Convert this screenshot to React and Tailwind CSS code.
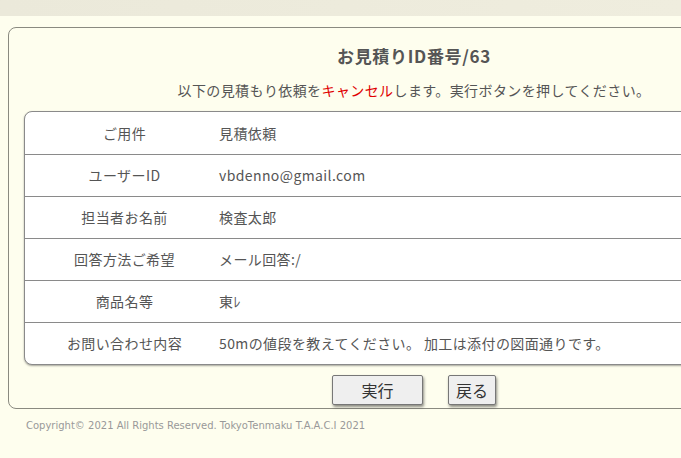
import React from "react";

const rows = [
  ["ご用件", "見積依頼"],
  ["ユーザーID", "vbdenno@gmail.com"],
  ["担当者お名前", "検査太郎"],
  ["回答方法ご希望", "メール回答:/"],
  ["商品名等", "東ﾚ"],
  ["お問い合わせ内容", "50mの値段を教えてください。 加工は添付の図面通りです。"],
];

export default function App() {
  return (
    <div
      className="w-[681px] h-[458px] overflow-hidden bg-[#fefeee] text-[#555]"
      style={{ fontFamily: '"Noto Sans CJK JP", "Noto Sans", sans-serif' }}
    >
      <div className="h-[16px] bg-gradient-to-r from-[#ebe9da] to-[#efedde]" />
      <div className="w-[830px] pl-[8px] pt-[11px]">
        <div className="w-[812px] border border-[#8a8a80] rounded-[8px] pt-[16px] pb-[3px] px-[15px]">
          <div className="h-[24px] leading-[24px] text-center text-[17px] font-bold tracking-[0.7px] text-[#555]">
            お見積りID番号/63
          </div>
          <div className="mt-[12px] h-[20px] leading-[20px] text-center text-[14px] tracking-[0.4px] text-[#555]">
            以下の見積もり依頼を<span className="text-[#e00000]">キャンセル</span>します。実行ボタンを押してください。
          </div>
          <div className="mt-[11px] bg-white border border-[#8a8a8a] rounded-[8px] overflow-hidden shadow-[0_1px_2px_rgba(0,0,0,0.35)]">
            {rows.map(([k, v], i) => (
              <div
                key={k}
                className={`flex h-[42px] items-center text-[14px] tracking-[0.4px] text-[#555] ${i > 0 ? "border-t border-[#8a8a8a]" : ""}`}
              >
                <div className="w-[194px] pl-[5px] text-center">{k}</div>
                <div>{v}</div>
              </div>
            ))}
          </div>
          <div className="mt-[10px] flex justify-center gap-[25px]">
            <button className="w-[91px] h-[30px] bg-[#efefef] border border-[#777] rounded-[2px] shadow-[1px_2px_3px_rgba(0,0,0,0.45)] text-[16px] text-[#333]">
              実行
            </button>
            <button className="w-[48px] h-[30px] bg-[#efefef] border border-[#777] rounded-[2px] shadow-[1px_2px_3px_rgba(0,0,0,0.45)] text-[16px] text-[#333]">
              戻る
            </button>
          </div>
        </div>
        <div
          className="mt-[9px] pl-[18px] text-[10px] text-[#999]"
          style={{ fontFamily: '"DejaVu Sans", Verdana, sans-serif' }}
        >
          Copyright© 2021 All Rights Reserved. TokyoTenmaku T.A.A.C.I 2021
        </div>
      </div>
    </div>
  );
}
